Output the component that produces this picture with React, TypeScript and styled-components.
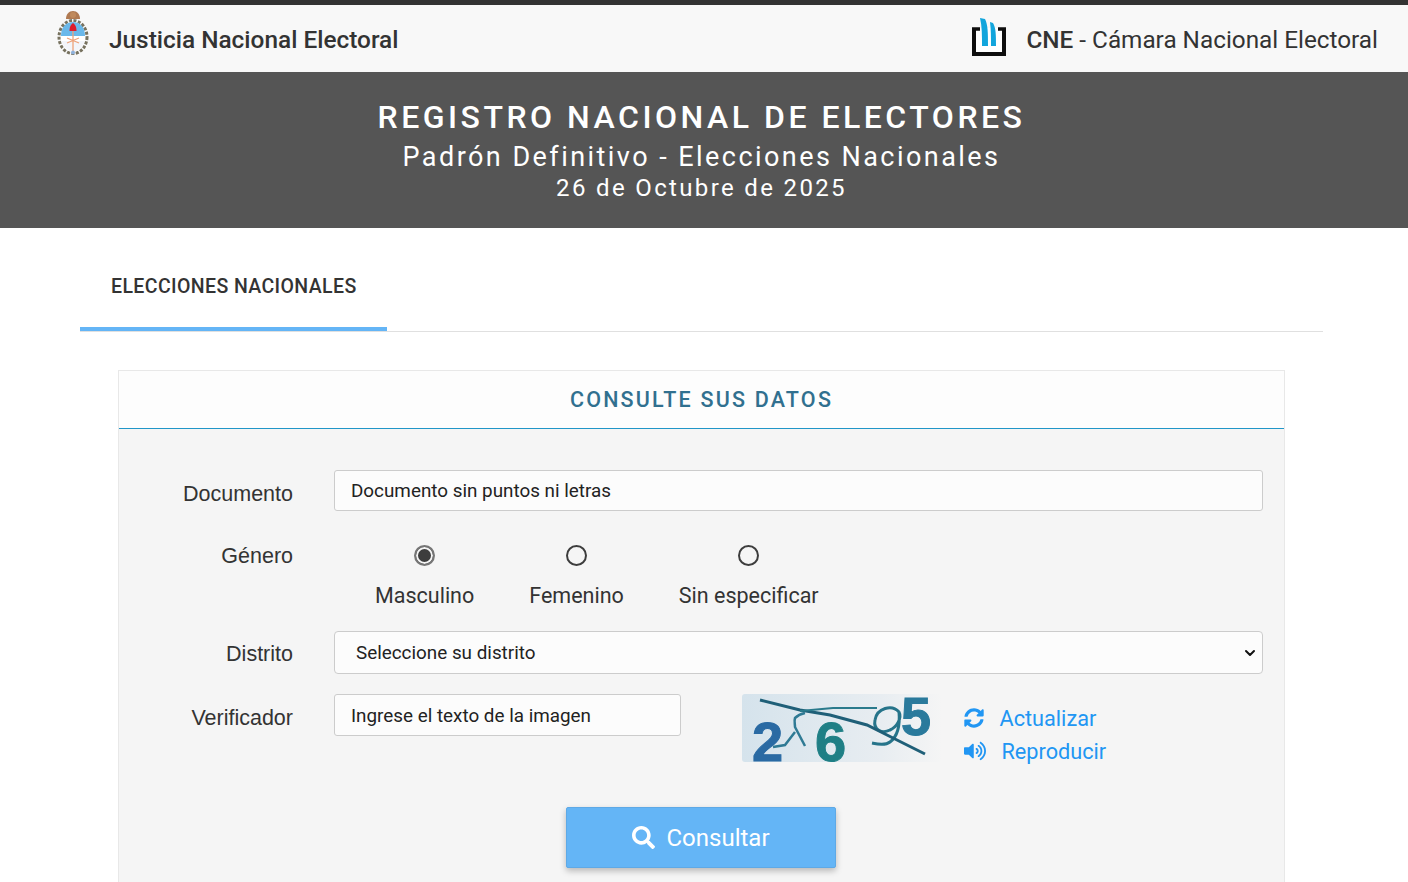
import React from "react";
import styled, { createGlobalStyle } from "styled-components";
import { FaSearch, FaSyncAlt, FaVolumeUp } from "react-icons/fa";
import { ChevronDown } from "lucide-react";

const GlobalStyle = createGlobalStyle`
  html, body {
    margin: 0;
    height: 882px;
    overflow: hidden;
    background: #fff;
    font-family: Roboto, "Liberation Sans", sans-serif;
    color: #333;
  }
  * { box-sizing: border-box; }
`;

const generos = [
  { label: "Masculino", checked: true },
  { label: "Femenino", checked: false },
  { label: "Sin especificar", checked: false },
];

const Escudo = () => (
  <svg width="32" height="45" viewBox="0 0 32 45">
    <path d="M9 9c0-5 3-8 7-8s7 3 7 8z" fill="#b07a52" />
    <circle cx="16" cy="5" r="3" fill="#c08a5c" />
    <ellipse cx="16" cy="27" rx="14" ry="16.500" fill="none" stroke="#77725f" strokeWidth="3" strokeDasharray="3 1.500" />
    <ellipse cx="16" cy="27" rx="12" ry="15" fill="#fff" />
    <path d="M4 26c0-9 5-14 12-14s12 5 12 14z" fill="#6ab8ea" />
    <path d="M4.500 31h23c-1 5-5 9-11.500 11-6-2-10.500-6-11.500-11z" fill="#f3f5fa" />
    <path d="M16 18v23M10 33l12-5M22 33l-12-5" stroke="#eda27a" strokeWidth="1.300" />
    <path d="M12.500 21c0-5 2-7 3.500-8 1.500 1 3.500 3 3.500 8z" fill="#dd1c2b" />
    <circle cx="16" cy="42.500" r="2" fill="#8fb2dc" />
  </svg>
);

const LogoCne = () => (
  <svg width="34" height="38" viewBox="0 0 34 38">
    <path d="M2 10h30v26H2z" fill="#fff" />
    <path d="M2 10v26h30V10" fill="none" stroke="#0e0e0e" strokeWidth="4" />
    <path d="M0 11h8M26 11h8" stroke="#0e0e0e" strokeWidth="3.500" />
    <path d="M8 0l5 1c3 6 3 14 3 27h-6c0-10 0-20-2-28z" fill="#12a5dc" />
    <path d="M18 4l3 1c3 5 3 12 3 23h-5c0-9 0-16-1-24z" fill="#12a5dc" />
  </svg>
);

const Captcha = () => (
  <CaptchaSvg width="200" height="68" viewBox="0 0 200 68">
    <defs>
      <linearGradient id="fondo" x1="0" y1="0" x2="1" y2="0">
        <stop offset="0" stopColor="#d5e3ec" />
        <stop offset="0.7" stopColor="#e8edf1" />
        <stop offset="1" stopColor="#f5f5f5" />
      </linearGradient>
    </defs>
    <rect width="200" height="68" rx="3" fill="url(#fondo)" />
    <CaptchaText x="10" y="67" fontSize="56" fill="#2a6aa3" stroke="#2a6aa3">2</CaptchaText>
    <CaptchaText x="73" y="67" fontSize="56" fill="#1f7f85" stroke="#1f7f85">6</CaptchaText>
    <CaptchaText x="159" y="41" fontSize="54" fill="#2a7a9c" stroke="#2a7a9c">5</CaptchaText>
    <path d="M157 18c-7-8-22-4-24 8-2 10 7 14 15 10 7-3 12-12 9-18 1 12-1 24-9 30-5 4-13 2-18 1" fill="none" stroke="#26748a" strokeWidth="3" />
    <path d="M18 6l40 10 30 5 37 10 20 10 38 19" fill="none" stroke="#1f5f78" strokeWidth="3" />
    <path d="M58 17l33-3h44" fill="none" stroke="#2a7a8c" strokeWidth="2" />
    <path d="M63 19c-5 1-8 3-10 5-1 3 0 6 0 9l10 19M53 38L43 51l-12 2" fill="none" stroke="#2f7a94" strokeWidth="2.500" />
  </CaptchaSvg>
);

const App: React.FC = () => (
  <>
    <GlobalStyle />
    <TopBar>
      <Brand>
        <EscudoBox>
          <Escudo />
        </EscudoBox>
        <BrandName>Justicia Nacional Electoral</BrandName>
      </Brand>
      <Camara>
        <LogoBox>
          <LogoCne />
        </LogoBox>
        <CamaraName>
          <strong>CNE</strong> - Cámara Nacional Electoral
        </CamaraName>
      </Camara>
    </TopBar>

    <Banner>
      <BannerTitle>REGISTRO NACIONAL DE ELECTORES</BannerTitle>
      <BannerSubtitle>Padrón Definitivo - Elecciones Nacionales</BannerSubtitle>
      <BannerDate>26 de Octubre de 2025</BannerDate>
    </Banner>

    <Tabs>
      <Tab>ELECCIONES NACIONALES</Tab>
    </Tabs>

    <Panel>
      <PanelHeader>CONSULTE SUS DATOS</PanelHeader>
      <PanelBody>
        <DocumentoRow>
          <Label $offset={11}>Documento</Label>
          <TextInput placeholder="Documento sin puntos ni letras" />
        </DocumentoRow>

        <GeneroRow>
          <Label $offset={12}>Género</Label>
          <RadioGroup>
            {generos.map((genero) => (
              <RadioOption key={genero.label}>
                <Radio type="radio" name="genero" defaultChecked={genero.checked} />
                {genero.label}
              </RadioOption>
            ))}
          </RadioGroup>
        </GeneroRow>

        <DistritoRow>
          <Label $offset={10}>Distrito</Label>
          <SelectWrap>
            <Select defaultValue="">
              <option value="">Seleccione su distrito</option>
            </Select>
            <SelectArrow>
              <ChevronDown size={16} strokeWidth={3} />
            </SelectArrow>
          </SelectWrap>
        </DistritoRow>

        <VerificadorRow>
          <Label $offset={11}>Verificador</Label>
          <VerificadorInput placeholder="Ingrese el texto de la imagen" />
          <CaptchaBox>
            <Captcha />
          </CaptchaBox>
          <CaptchaActions>
            <ActionLink href="#">
              <FaSyncAlt size={20} />
              <span>Actualizar</span>
            </ActionLink>
            <ActionLink href="#">
              <FaVolumeUp size={22} />
              <span>Reproducir</span>
            </ActionLink>
          </CaptchaActions>
        </VerificadorRow>

        <SubmitRow>
          <SubmitButton type="button">
            <FaSearch size={23} />
            Consultar
          </SubmitButton>
        </SubmitRow>
      </PanelBody>
    </Panel>
  </>
);

const TopBar = styled.header`
  height: 72px;
  border-top: 5px solid #333;
  background: #f8f8f8;
  display: flex;
  align-items: center;
  justify-content: space-between;
  padding: 0 30px 0 57px;
`;

const Brand = styled.div`
  display: flex;
  align-items: center;
  gap: 20px;
`;

const EscudoBox = styled.div`
  display: flex;
  margin-top: -12px;
`;

const BrandName = styled.span`
  font-size: 24.400px;
  font-weight: 500;
  color: #333;
  padding-top: 2px;
`;

const Camara = styled.div`
  display: flex;
  align-items: center;
  gap: 20px;
`;

const LogoBox = styled.div`
  display: flex;
  margin-top: -4px;
`;

const CamaraName = styled.span`
  font-size: 24.300px;
  color: #333;
  padding-top: 2px;

  strong {
    font-weight: 500;
  }
`;

const Banner = styled.section`
  height: 156px;
  background: #555;
  color: #fff;
  display: flex;
  flex-direction: column;
  align-items: center;
  padding: 26px 5px 0 0;
`;

const BannerTitle = styled.div`
  font-size: 32px;
  line-height: 38px;
  font-weight: 500;
  letter-spacing: 3.500px;
  margin-bottom: 6px;
`;

const BannerSubtitle = styled.div`
  font-size: 27px;
  line-height: 31px;
  letter-spacing: 2.450px;
  margin-bottom: 1px;
`;

const BannerDate = styled.div`
  font-size: 24px;
  line-height: 29px;
  letter-spacing: 2.350px;
`;

const Tabs = styled.nav`
  margin: 0 85px 0 80px;
  height: 104px;
  border-bottom: 1px solid #e0e0e0;
  display: flex;
`;

const Tab = styled.div`
  width: 307px;
  height: 103px;
  border-bottom: 4px solid #64b5f6;
  padding: 47px 0 0 31px;
  font-size: 19.500px;
  line-height: 23px;
  font-weight: 500;
  letter-spacing: 0.400px;
  color: #333;
`;

const Panel = styled.section`
  margin: 38px 123px 0 118px;
  border: 1px solid #e8e8e8;
  background: #f5f5f5;
`;

const PanelHeader = styled.h2`
  margin: 0;
  height: 58px;
  background: #fdfdfd;
  border-bottom: 1px solid #2196c8;
  text-align: center;
  font-size: 21.500px;
  line-height: 57px;
  font-weight: 500;
  letter-spacing: 2.200px;
  color: #31708f;
`;

const PanelBody = styled.div`
  padding: 41px 21px 60px 0;
`;

const FormRow = styled.div`
  display: grid;
  grid-template-columns: 174px 1fr;
  column-gap: 41px;
  align-items: start;
`;

const DocumentoRow = styled(FormRow)`
  margin-bottom: 20px;
`;

const GeneroRow = styled(FormRow)`
  margin-bottom: 22px;
`;

const DistritoRow = styled(FormRow)`
  margin-bottom: 20px;
`;

const VerificadorRow = styled.div`
  display: grid;
  grid-template-columns: 174px 347px 200px auto;
  column-gap: 41px;
  align-items: start;
  height: 72px;
`;

const Label = styled.label<{ $offset: number }>`
  margin-top: ${(p) => p.$offset}px;
  text-align: right;
  font-family: "Liberation Sans", Arial, sans-serif;
  font-size: 21.500px;
  line-height: 26px;
  color: #333;
`;

const TextInput = styled.input`
  height: 41px;
  width: 100%;
  border: 1px solid #ccc;
  border-radius: 3px;
  background: #fcfcfc;
  padding: 0 16px;
  font: 400 18.850px Roboto, sans-serif;
  color: #222;

  &::placeholder {
    color: #222;
    opacity: 1;
  }
`;

const VerificadorInput = styled(TextInput)`
  height: 42px;
  padding-top: 1px;
`;

const RadioGroup = styled.div`
  display: flex;
  gap: 55px;
  padding: 14px 0 0 41px;
`;

const RadioOption = styled.label`
  display: flex;
  flex-direction: column;
  align-items: center;
  gap: 17px;
  font-size: 21.500px;
  line-height: 26px;
  color: #333;
`;

const Radio = styled.input`
  appearance: none;
  margin: 0;
  width: 21px;
  height: 21px;
  border-radius: 50%;
  border: 2px solid #3d3d3d;
  background: transparent;
  display: block;

  &:checked {
    border-color: #767676;
    background: #3d3d3d;
    box-shadow: inset 0 0 0 2px #f5f5f5;
  }
`;

const SelectWrap = styled.div`
  position: relative;
`;

const Select = styled.select`
  appearance: none;
  display: block;
  height: 43px;
  width: 100%;
  border: 1px solid #ccc;
  border-radius: 4px;
  background: #fcfcfc;
  padding: 0 30px 0 21px;
  font: 400 18.850px Roboto, sans-serif;
  color: #222;
`;

const SelectArrow = styled.span`
  position: absolute;
  top: 14px;
  right: 5px;
  display: flex;
  color: #111;
  pointer-events: none;
`;

const CaptchaBox = styled.div`
  height: 68px;
  margin-left: 20px;
  width: 200px;
`;

const CaptchaSvg = styled.svg`
  display: block;
  overflow: visible;
`;

const CaptchaActions = styled.div`
  display: flex;
  flex-direction: column;
  gap: 5px;
  margin-left: 1px;
  padding-top: 10px;
`;

const ActionLink = styled.a`
  display: flex;
  align-items: center;
  gap: 15.500px;
  height: 28px;
  font-size: 21.700px;
  color: #2196f3;
  text-decoration: none;
`;

const SubmitRow = styled.div`
  display: flex;
  justify-content: center;
  padding-left: 20px;
  margin-top: 41px;
`;

const SubmitButton = styled.button`
  width: 270px;
  height: 61px;
  border: 1px solid #5ea9e6;
  border-radius: 2px;
  background: #64b5f6;
  color: #fff;
  display: flex;
  align-items: center;
  justify-content: center;
  gap: 11px;
  font: 400 24px Roboto, sans-serif;
  box-shadow: 0 3px 6px rgba(0, 0, 0, 0.25);
`;

const CaptchaText = styled.text`
  font-family: "Liberation Sans", sans-serif;
  font-weight: 700;
  stroke-width: 1px;
`;

export default App;
